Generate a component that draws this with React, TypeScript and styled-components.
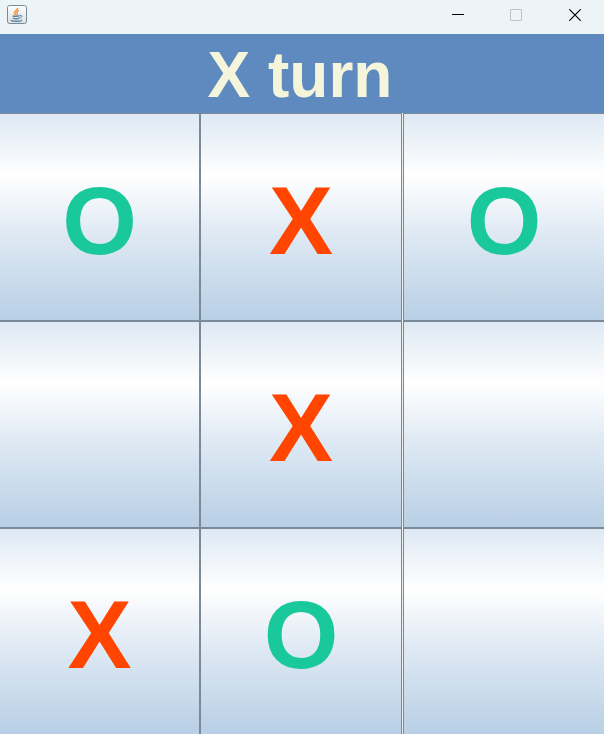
import React, { useState } from "react";
import styled, { createGlobalStyle } from "styled-components";

type Mark = "X" | "O" | "";

const Global = createGlobalStyle`
  * { box-sizing: border-box; }
  html, body, #root { height: 100%; margin: 0; }
  body { font-family: "Liberation Sans", Arial, sans-serif; }
`;

const Window = styled.div`
  display: flex;
  flex-direction: column;
  min-height: 100%;
  background: #eeeeee;
`;

const TitleBar = styled.header`
  display: flex;
  align-items: flex-start;
  justify-content: space-between;
  height: 34px;
  background: #ecf4f8;
`;

const AppIcon = styled.svg`
  margin: 5px 0 0 7px;
`;

const Controls = styled.div`
  display: flex;
`;

const ControlButton = styled.button`
  display: flex;
  align-items: center;
  justify-content: center;
  width: 58px;
  height: 30px;
  padding: 0;
  border: 0;
  background: transparent;
  color: #000;

  &:disabled {
    color: #bcc3c6;
  }
`;

const Status = styled.h1`
  margin: 0;
  padding: 4px 4px 0 0;
  background: #5f8ac0;
  color: #f5f5dc;
  font-size: 64px;
  line-height: 75px;
  font-weight: 700;
  text-align: center;
`;

const Board = styled.main`
  flex: 1;
  display: grid;
  grid-template-columns: 200fr 202fr 202fr;
  grid-template-rows: 208fr 207fr 206fr;
`;

const Cell = styled.button<{ $mark: Mark }>`
  display: flex;
  align-items: center;
  justify-content: center;
  min-width: 0;
  min-height: 0;
  padding: 7px 0 0;
  border: 1px solid #7a8a99;
  background: linear-gradient(#dde8f3, #ffffff 30%, #dde8f3 60%, #b8cfe5) border-box;
  color: ${(p) => (p.$mark === "X" ? "#ff4500" : "#19c89b")};
  font: 700 96px "Liberation Sans", Arial, sans-serif;

  &:nth-child(3n + 1) {
    border-left: 0;
  }

  &:nth-child(3n) {
    margin-left: 1px;
    border-right: 0;
  }

  &:nth-child(n + 7) {
    border-bottom: 0;
  }
`;

const start: Mark[] = ["O", "X", "O", "", "X", "", "X", "O", ""];

function JavaIcon() {
  return (
    <AppIcon width="20" height="20" viewBox="0 0 20 20" fill="none" aria-hidden="true">
      <defs>
        <linearGradient id="tile" x1="0" y1="0" x2="0" y2="1">
          <stop offset="0" stopColor="#ffffff" />
          <stop offset="1" stopColor="#dcdedf" />
        </linearGradient>
      </defs>
      <rect x="0.5" y="0.5" width="19" height="18" rx="2" fill="url(#tile)" stroke="#718c9d" />
      <path d="M10.5 3C11.5 5 7 6 7.5 8C7.8 9 9 9.5 9 10.5" stroke="#f09a4a" strokeWidth="1.8" />
      <path d="M12 5.5C9.5 6.5 9.5 7.5 10.3 8.5C11 9.5 10 10 9.8 10.5" stroke="#e98434" strokeWidth="1.2" />
      <path d="M5.5 10.8C7 11.6 11.5 11.5 12.8 10.7M6 13C7.5 14 11 14 12.5 13" stroke="#5c87a3" strokeWidth="1.5" />
      <path d="M13 10.5C15.5 9.8 15.5 12.5 12.8 13" stroke="#5c87a3" />
      <path d="M4 15.3C6 16.6 12.5 16.6 15 15.3" stroke="#5c87a3" strokeWidth="1.5" />
    </AppIcon>
  );
}

export default function App() {
  const [marks, setMarks] = useState<Mark[]>(start);
  const [turn, setTurn] = useState<"X" | "O">("X");

  const play = (index: number) => {
    if (marks[index]) return;
    setMarks(marks.map((m, i) => (i === index ? turn : m)));
    setTurn(turn === "X" ? "O" : "X");
  };

  return (
    <Window>
      <Global />
      <TitleBar>
        <JavaIcon />
        <Controls>
          <ControlButton aria-label="Minimize">
            <svg width="14" height="12" viewBox="0 0 14 12">
              <path d="M0 5.5H12" stroke="currentColor" />
            </svg>
          </ControlButton>
          <ControlButton aria-label="Maximize" disabled>
            <svg width="14" height="12" viewBox="0 0 14 12" fill="none">
              <rect x="0.5" y="0.5" width="11" height="11" rx="0.5" stroke="currentColor" />
            </svg>
          </ControlButton>
          <ControlButton aria-label="Close">
            <svg width="12" height="12" viewBox="0 0 12 12">
              <path d="M0.3 0.3L11.7 11.7M11.7 0.3L0.3 11.7" stroke="currentColor" strokeWidth="1.2" />
            </svg>
          </ControlButton>
        </Controls>
      </TitleBar>
      <Status>{turn} turn</Status>
      <Board>
        {marks.map((mark, i) => (
          <Cell key={i} $mark={mark} aria-label={`Square ${i + 1} ${mark}`} onClick={() => play(i)}>
            {mark}
          </Cell>
        ))}
      </Board>
    </Window>
  );
}
